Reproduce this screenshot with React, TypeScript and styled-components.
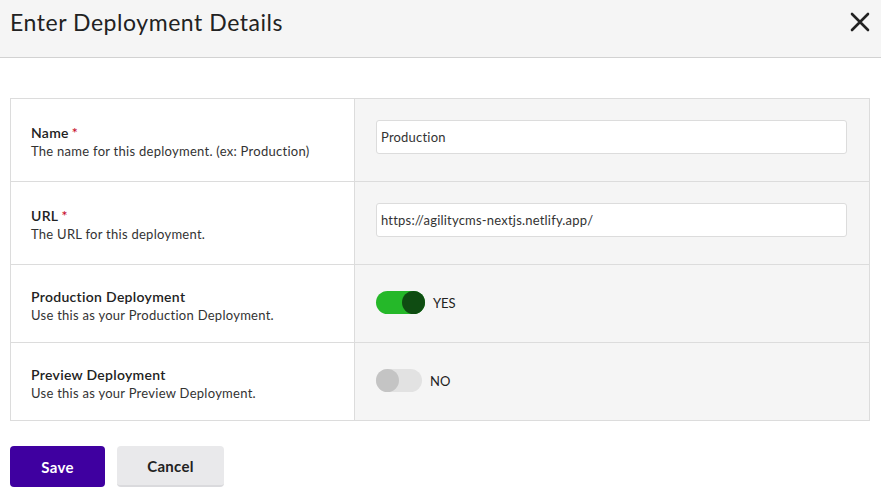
import React from "react";
import styled, { createGlobalStyle } from "styled-components";

const GlobalStyle = createGlobalStyle`
  html, body {
    margin: 0;
    padding: 0;
    background: #fff;
    font-family: "Lato", "Open Sans", sans-serif;
    color: #222;
  }
  * { box-sizing: border-box; }
`;

type Field = {
  label: string;
  required?: boolean;
  help: string;
  kind: "text" | "toggle";
  value?: string;
  on?: boolean;
  tall?: boolean;
};

const fields: Field[] = [
  { label: "Name", required: true, help: "The name for this deployment. (ex: Production)", kind: "text", value: "Production", tall: true },
  { label: "URL", required: true, help: "The URL for this deployment.", kind: "text", value: "https://agilitycms-nextjs.netlify.app/", tall: true },
  { label: "Production Deployment", help: "Use this as your Production Deployment.", kind: "toggle", on: true },
  { label: "Preview Deployment", help: "Use this as your Preview Deployment.", kind: "toggle", on: false },
];

export default function App() {
  return (
    <>
      <GlobalStyle />
      <Modal>
        <Header>
          <Title>Enter Deployment Details</Title>
          <CloseButton aria-label="Close">
            <svg width="20" height="20" viewBox="0 0 20 20">
              <path d="M2 2 L18 18 M18 2 L2 18" stroke="#222" strokeWidth="2.6" strokeLinecap="round" />
            </svg>
          </CloseButton>
        </Header>
        <Body>
          <Table>
            {fields.map((f) => (
              <Row key={f.label} $tall={f.tall}>
                <LabelCell>
                  <Label>
                    {f.label}
                    {f.required && <Required>*</Required>}
                  </Label>
                  <Help>{f.help}</Help>
                </LabelCell>
                <ValueCell>
                  {f.kind === "text" ? (
                    <TextInput defaultValue={f.value} />
                  ) : (
                    <ToggleWrap>
                      <Track $on={!!f.on}>
                        <Knob $on={!!f.on} />
                      </Track>
                      <ToggleText>{f.on ? "YES" : "NO"}</ToggleText>
                    </ToggleWrap>
                  )}
                </ValueCell>
              </Row>
            ))}
          </Table>
          <Actions>
            <SaveButton>Save</SaveButton>
            <CancelButton>Cancel</CancelButton>
          </Actions>
        </Body>
      </Modal>
    </>
  );
}

const Modal = styled.div`
  width: 881px;
  height: 504px;
  background: #fff;
`;

const Header = styled.div`
  height: 58px;
  background: #f5f5f5;
  border-bottom: 1px solid #d2d2d2;
  display: flex;
  align-items: flex-start;
  justify-content: space-between;
  padding: 0 11px 0 10px;
`;

const Title = styled.h1`
  margin: 8px 0 0;
  font-size: 23px;
  font-weight: 400;
  color: #222;
  letter-spacing: 0.55px;
`;

const CloseButton = styled.button`
  margin-top: 12px;
  border: 0;
  padding: 0;
  background: transparent;
  width: 20px;
  height: 20px;
  display: flex;
`;

const Body = styled.div`
  padding: 40px 11px 0 10px;
`;

const Table = styled.div`
  border: 1px solid #dcdcdc;
  border-bottom: 0;
`;

const Row = styled.div<{ $tall?: boolean }>`
  display: grid;
  grid-template-columns: 344px 1fr;
  height: ${(p) => (p.$tall ? 83 : 78)}px;
  border-bottom: 1px solid #dcdcdc;
`;

const LabelCell = styled.div`
  display: flex;
  flex-direction: column;
  justify-content: center;
  padding: 3px 0 0 20px;
  border-right: 1px solid #dcdcdc;
  background: #fff;
`;

const Label = styled.div`
  font-size: 14px;
  font-weight: 600;
  color: #222;
  line-height: 19px;
  letter-spacing: 0.3px;
`;

const Required = styled.span`
  color: #c8102e;
  margin-left: 3px;
`;

const Help = styled.div`
  font-size: 13px;
  color: #333;
  line-height: 18px;
  letter-spacing: 0.27px;
`;

const ValueCell = styled.div`
  display: flex;
  align-items: center;
  background: #f5f5f5;
  padding: 0 22px 0 21px;
`;

const TextInput = styled.input`
  width: 100%;
  height: 34px;
  border: 1px solid #dcdcdc;
  border-radius: 3px;
  background: #fff;
  padding: 0 4px;
  font-family: inherit;
  font-size: 13px;
  letter-spacing: 0.2px;
  color: #333;
  outline: none;
  margin-top: -6px;
`;

const ToggleWrap = styled.div`
  display: flex;
  align-items: center;
  gap: 8px;
  margin-top: -2px;
`;

const Track = styled.div<{ $on: boolean }>`
  width: ${(p) => (p.$on ? 49 : 46)}px;
  height: 23px;
  border-radius: 12px;
  background: ${(p) => (p.$on ? "#25b829" : "#e2e2e2")};
  display: flex;
  justify-content: ${(p) => (p.$on ? "flex-end" : "flex-start")};
`;

const Knob = styled.div<{ $on: boolean }>`
  width: 23px;
  height: 23px;
  border-radius: 50%;
  background: ${(p) => (p.$on ? "#0f4c12" : "#c4c4c4")};
`;

const ToggleText = styled.span`
  font-size: 13px;
  color: #222;
`;

const Actions = styled.div`
  display: flex;
  gap: 12px;
  margin-top: 25px;
`;

const BaseButton = styled.button`
  height: 41px;
  border: 0;
  border-radius: 4px;
  font-family: inherit;
  font-size: 15px;
  font-weight: 700;
  letter-spacing: 0.3px;
  cursor: pointer;
`;

const SaveButton = styled(BaseButton)`
  width: 95px;
  background: #3f00a0;
  color: #fff;
`;

const CancelButton = styled(BaseButton)`
  width: 107px;
  background: #e9e9eb;
  color: #222;
  border-bottom: 2px solid #dadadd;
`;
